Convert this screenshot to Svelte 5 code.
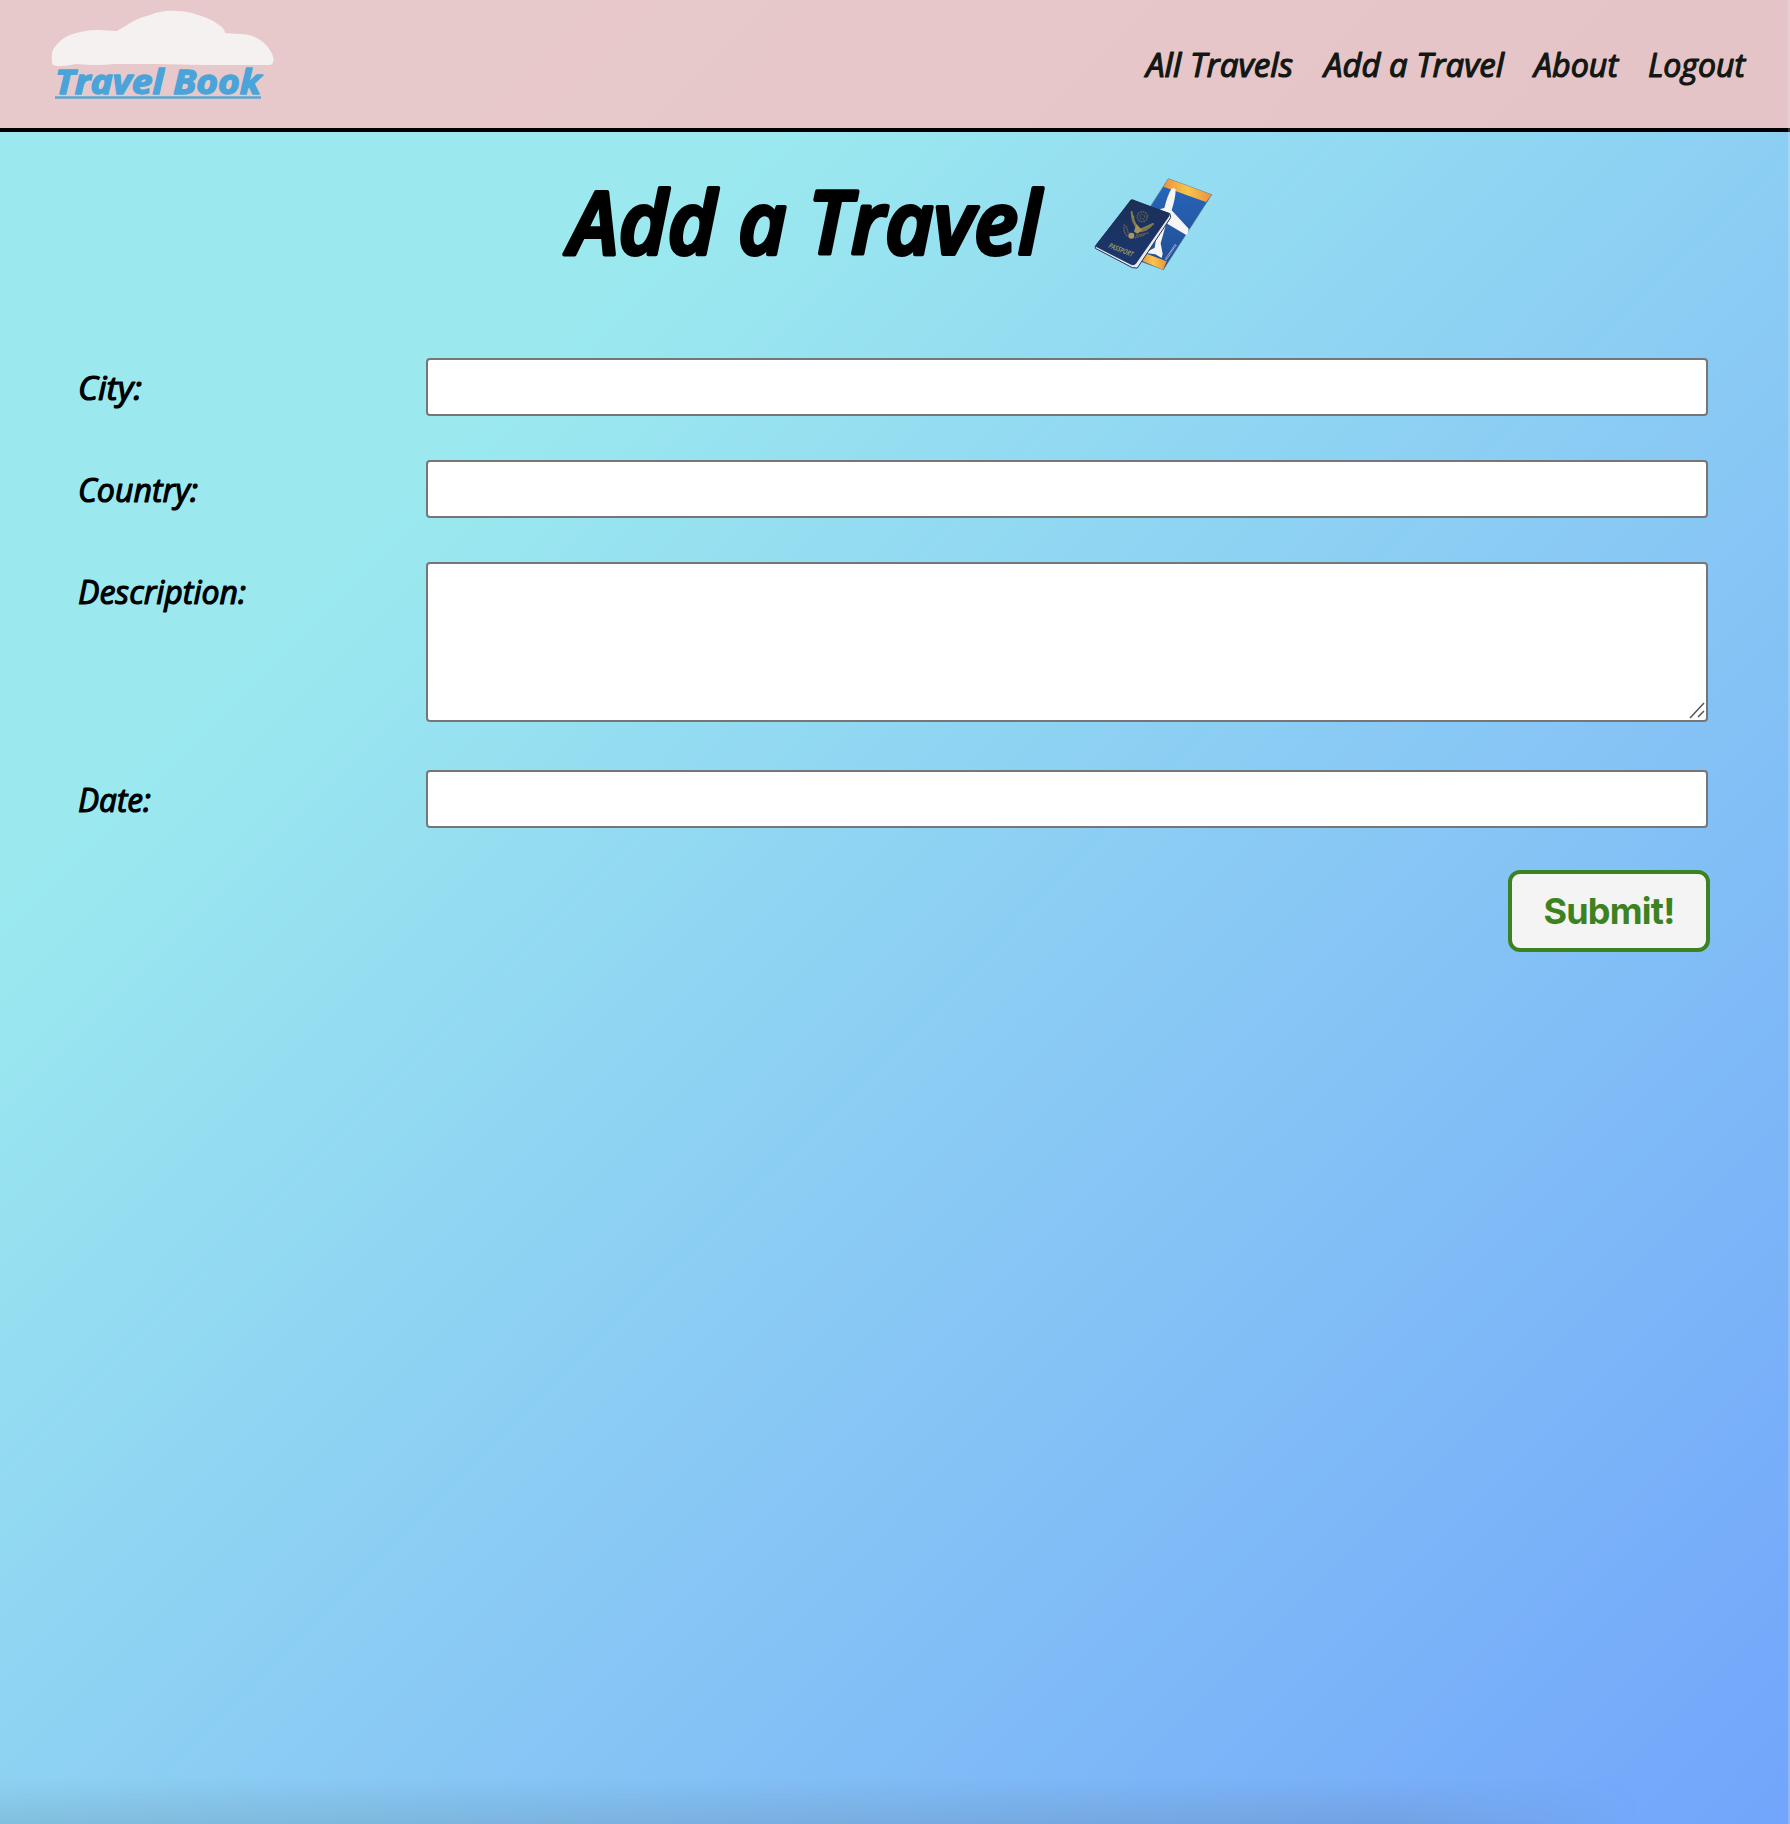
<script>
  const links = [
    { label: 'All Travels', width: 149, gap: 29 },
    { label: 'Add a Travel', width: 182, gap: 28 },
    { label: 'About', width: 86, gap: 28 },
    { label: 'Logout', width: 99, gap: 0 },
  ];
  const fields = [
    { id: 'city', label: 'City:', width: 66 },
    { id: 'country', label: 'Country:', width: 122 },
    { id: 'description', label: 'Description:', width: 170, long: true },
    { id: 'date', label: 'Date:', width: 75 },
  ];
</script>

{#snippet script(text, width)}
  <svg class="script" {width} height="48" viewBox="0 0 {width} 48">
    <text x="1" y="34" textLength={width - 2} lengthAdjust="spacingAndGlyphs">{text}</text>
  </svg>
{/snippet}

<div class="page">
  <header>
    <a class="logo" href="#home" aria-label="Travel Book">
      <svg width="240" height="110" viewBox="40 0 240 110">
        <path class="cloud" d="M52 62 Q51 52 54 48 Q60 39 70 35 Q84 30 98 30 L117 31 L127 25 Q137 18 150 15 Q163 10 175 11 Q188 11 198 15 Q212 19 219 25 Q225 29 225 33 L240 34 Q253 34 263 42 Q272 50 273.500 59 Q274 64 270 65 L206 65 L157 64 H115 Q97 66 76 64 Q63 67 55 65.500 Q52 65 52 62Z" />
        <text x="55" y="93.500" textLength="206" lengthAdjust="spacingAndGlyphs">Travel Book</text>
        <path class="rule" d="M55 97.500H261" />
      </svg>
    </a>
    <nav>
      {#each links as link}
        <a href="#{link.label}" style="margin-right: {link.gap}px">{@render script(link.label, link.width)}</a>
      {/each}
    </nav>
  </header>

  <main>
    <h1>
      <svg class="heading" width="484" height="110" viewBox="0 0 484 110">
        <text x="6" y="83.500" textLength="472" lengthAdjust="spacingAndGlyphs">Add a Travel</text>
      </svg>
      <svg class="passport" width="122" height="100" viewBox="0 0 366 300" aria-hidden="true">
        <defs>
          <linearGradient id="gold"><stop offset="0" stop-color="#ed9138" /><stop offset=".5" stop-color="#f8c54b" /><stop offset="1" stop-color="#eb9140" /></linearGradient>
          <linearGradient id="ticket" x1="0" y1="0" x2="0" y2="1"><stop offset="0" stop-color="#2866bd" /><stop offset="1" stop-color="#224d91" /></linearGradient>
          <linearGradient id="cover" x1="0" y1="0" x2="0" y2="1"><stop offset="0" stop-color="#1c2f56" /><stop offset="1" stop-color="#1b376f" /></linearGradient>
        </defs>
        <path fill="url(#ticket)" stroke="#557592" stroke-width="2" d="M229 14L359 62L214 287L84 239Z" />
        <path fill="url(#gold)" d="M229 14L359 62L342 84L214 38Z" />
        <path fill="url(#gold)" d="M150 234L224 262L213 287L144 258Z" />
        <path fill="#f5f5f5" d="M238 45Q245 38 251 47Q251 69 239 109L290 164Q289 176 284 184L223 148L206 208L212 240L209 252L190 241L167 238L168 232L188 221L199 153Q216 137 214 118Q203 109 205 105L217 102Q227 62 238 45Z" />
        <path stroke="#bfd0e8" stroke-width="7" stroke-dasharray="2 2" d="M221 257L251 212" />
        <path fill="#e7ebf0" stroke="#24344e" stroke-width="3" stroke-linejoin="round" d="M118 79L234 119L236 131L136 282L121 281L10 223L10 216Z" />
        <path fill="url(#cover)" d="M116 77Q121 74 127 78L229 116Q236 121 230 129L132 269Q126 276 117 272L14 220Q9 216 14 210Z" />
        <g fill="none" stroke="#857b50" stroke-linecap="round">
          <!-- wings -->
          <path stroke-width="6" d="M119 114Q120 146 137 162M183 150Q168 158 146 166" />
          <path stroke-width="5" d="M124 126Q124 148 137 164M177 156Q168 166 146 170M128 144L136 164M165 166L146 172" />
          <!-- star cluster -->
          <circle cx="151" cy="128" r="15" stroke-width="5" stroke-dasharray="2 6" opacity=".55" />
          <circle cx="151" cy="128" r="7" stroke-width="4" stroke-dasharray="2 5" opacity=".5" />
          <!-- branch and arrows -->
          <path stroke-width="5" stroke-dasharray="2 6" opacity=".6" d="M97 153Q92 174 107 187M103 158L109 177M130 191L160 182M134 184L168 177" />
        </g>
        <path fill="#a59358" d="M133 150L150 168L137 179L126 173Z" />
        <circle cx="118" cy="185" r="9" fill="#aa9862" />
        <text class="passport-text" transform="translate(47 220) rotate(22) skewX(-12)" textLength="77" lengthAdjust="spacingAndGlyphs">PASSPORT</text>
      </svg>
    </h1>

    <form onsubmit={(e) => e.preventDefault()}>
      {#each fields as field}
        <div class="row">
          <label for={field.id}>{@render script(field.label, field.width)}</label>
          {#if field.long}
            <div class="area">
              <textarea id={field.id}></textarea>
              <svg class="grip" width="16" height="17" viewBox="0 0 16 17"><path d="M1 16L15 1M9 15L15 9" /></svg>
            </div>
          {:else}
            <input id={field.id} type="text" />
          {/if}
        </div>
      {/each}
      <button type="submit">Submit!</button>
    </form>
  </main>
  <div class="edge"></div>
  <div class="shade"></div>
</div>

<style>
  :global(body) { margin: 0; }
  .page {
    position: relative;
    box-sizing: border-box;
    height: 1824px;
    overflow: hidden;
    background: linear-gradient(135deg, #9be9ef 25%, #8acbf4 57%, #72a5fb 100%);
  }
  header {
    box-sizing: border-box;
    height: 132px;
    display: flex;
    justify-content: space-between;
    padding: 0 44px 0 40px;
    border-bottom: 4px solid #000;
    background: linear-gradient(135deg, #e8c9cb 30%, #e5c4c7 90%);
  }
  .logo, nav a { display: block; }
  svg { display: block; overflow: visible; }
  .cloud { fill: #f5f1f0; }
  .logo text {
    font: italic 700 34px "Open Sans", sans-serif;
    fill: #4aa4d9;
    stroke: #4aa4d9;
    stroke-width: 1.4;
    stroke-linejoin: round;
  }
  .rule { stroke: #5ca4d0; stroke-width: 2.5; }
  nav { display: flex; padding-top: 42.5px; }
  .script text {
    font: italic 500 33px "Open Sans", sans-serif;
    fill: #000;
    stroke: #000;
    stroke-width: 1.2;
    stroke-linejoin: round;
  }
  nav .script text { fill: #121713; stroke: #121713; }
  h1 {
    margin: 0;
    display: flex;
    gap: 45px;
    padding: 38px 0 0 563px;
    height: 188px;
  }
  .heading text {
    font: italic 600 86px "Open Sans", sans-serif;
    stroke: #000;
    stroke-width: 4;
    stroke-linejoin: round;
  }
  .passport { margin-top: 4px; }
  .passport-text { font: 700 22px "Open Sans", sans-serif; fill: #9d9160; }
  form {
    display: flex;
    flex-direction: column;
    padding: 0 82px 0 77px;
  }
  .row {
    display: grid;
    grid-template-columns: 349px 1282px;
    margin-bottom: 44px;
  }
  label { padding-top: 8px; height: 50px; }
  input, textarea {
    display: block;
    box-sizing: border-box;
    width: 100%;
    height: 58px;
    border: 2px solid #767676;
    border-radius: 4px;
    background: #fff;
    padding: 4px 8px;
    font: 28px Inter, sans-serif;
    outline: none;
  }
  .area { position: relative; margin-bottom: 4px; }
  textarea { height: 160px; resize: none; }
  .grip { position: absolute; right: 3px; bottom: 3px; }
  .grip path { stroke: #555; stroke-width: 1.5; }
  button {
    box-sizing: border-box;
    align-self: flex-end;
    width: 202px;
    height: 82px;
    margin-top: -2px;
    margin-right: -2px;
    border: 4px solid #3d8221;
    border-radius: 12px;
    background: #f4f4f4;
    color: #3d8221;
    font: 700 36px Inter, sans-serif;
    letter-spacing: -.8px;
    padding: 0;
  }
  .edge {
    position: absolute;
    top: 0;
    right: 0;
    width: 2px;
    height: 100%;
    background: rgb(255 255 255 / .2);
  }
  .shade {
    position: absolute;
    left: 0;
    bottom: 0;
    width: 1640px;
    height: 46px;
    background: linear-gradient(to top, rgb(80 100 110 / .16), transparent);
    mask-image: linear-gradient(to right, #000 85%, transparent);
  }
</style>
